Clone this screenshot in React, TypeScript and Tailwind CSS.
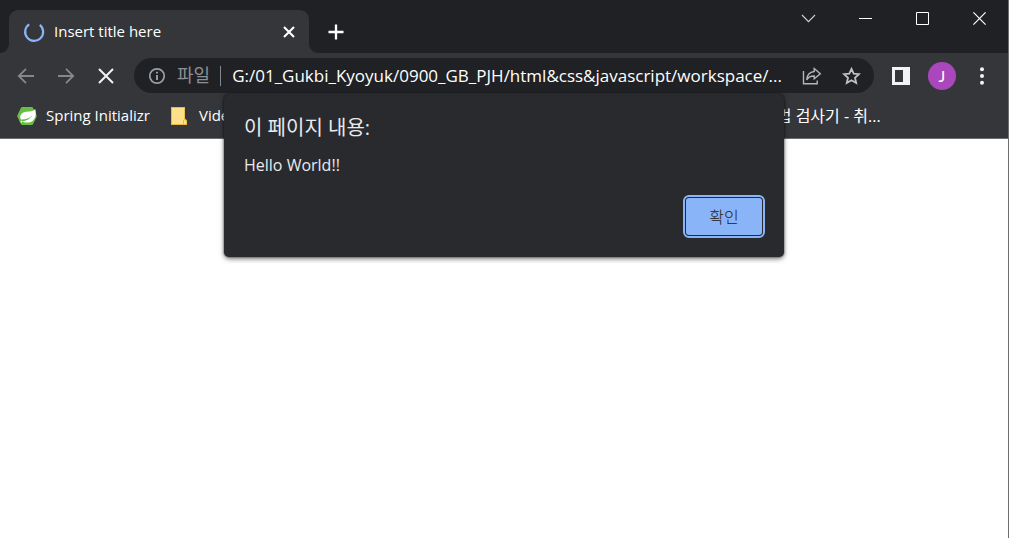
import type { ReactNode } from "react";

function IconButton({ label, className, children }: { label: string; className: string; children: ReactNode }) {
  return (
    <button type="button" aria-label={label} className={`flex shrink-0 items-center justify-center ${className}`}>
      {children}
    </button>
  );
}

function TitleBar() {
  return (
    <header className="flex h-[53px] items-start bg-[#202124]">
      <div className="flex h-full items-end">
        <svg width="9" height="9" viewBox="0 0 9 9" className="shrink-0" aria-hidden="true">
          <path d="M9 0A9 9 0 0 1 0 9H9Z" fill="#35363a" />
        </svg>
        <div className="flex h-[43px] w-[300px] items-center rounded-t-[9px] bg-[#35363a] pr-3 pl-[14px]">
          <svg width="22" height="22" viewBox="0 0 22 22" fill="none" className="shrink-0" aria-hidden="true">
            <path d="M6.2 3.4A9 9 0 1 0 16.8 3.9" stroke="#8ab4f8" strokeWidth="2.2" />
          </svg>
          <span className="ml-[9px] grow text-[15px] text-white">Insert title here</span>
          <IconButton label="Close tab" className="size-4">
            <svg width="12" height="12" viewBox="0 0 12 12" stroke="#fff" strokeWidth="2.1">
              <path d="M1 1L11 11M11 1L1 11" />
            </svg>
          </IconButton>
        </div>
        <svg width="9" height="9" viewBox="0 0 9 9" className="shrink-0" aria-hidden="true">
          <path d="M0 0A9 9 0 0 0 9 9H0Z" fill="#35363a" />
        </svg>
      </div>
      <IconButton label="New tab" className="mt-[14px] ml-1 h-[35px] w-7">
        <svg width="16" height="16" viewBox="0 0 16 16" stroke="#fff" strokeWidth="2.3">
          <path d="M8 .5V15.5M.5 8H15.5" />
        </svg>
      </IconButton>
      <div className="ml-auto flex">
        <IconButton label="Search tabs" className="h-[37px] w-[57px]">
          <svg width="15" height="9" viewBox="0 0 15 9" fill="none" stroke="#d0d0d1" strokeWidth="1.1">
            <path d="M1 1L7.5 7.7L14 1" />
          </svg>
        </IconButton>
        <IconButton label="Minimize" className="h-[37px] w-[57px]">
          <svg width="13" height="13" viewBox="0 0 13 13" stroke="#fff">
            <path d="M0 6.5H13" />
          </svg>
        </IconButton>
        <IconButton label="Maximize" className="h-[37px] w-[57px]">
          <svg width="13" height="13" viewBox="0 0 13 13" fill="none" stroke="#fff">
            <path d="M.5 .5H12.5V12.5H.5Z" />
          </svg>
        </IconButton>
        <IconButton label="Close" className="h-[37px] w-[57px]">
          <svg width="13" height="13" viewBox="0 0 13 13" stroke="#fff" strokeWidth="1.2">
            <path d="M.4 .4L12.6 12.6M12.6 .4L.4 12.6" />
          </svg>
        </IconButton>
      </div>
    </header>
  );
}

function Toolbar() {
  return (
    <div className="flex h-[45px] items-center bg-[#35363a] pr-[18px] pl-[6px]">
      <IconButton label="Back" className="h-8 w-10">
        <svg width="18" height="16" viewBox="0 0 18 16" fill="none" stroke="#86878a" strokeWidth="1.8">
          <path d="M17 8H2M9 .8L1.8 8L9 15.2" />
        </svg>
      </IconButton>
      <IconButton label="Forward" className="h-8 w-10">
        <svg width="18" height="16" viewBox="0 0 18 16" fill="none" stroke="#86878a" strokeWidth="1.8">
          <path d="M1 8H16M9 .8L16.2 8L9 15.2" />
        </svg>
      </IconButton>
      <IconButton label="Stop loading" className="h-8 w-10">
        <svg width="16" height="16" viewBox="0 0 16 16" stroke="#f1f3f4" strokeWidth="2">
          <path d="M1 1L15 15M15 1L1 15" />
        </svg>
      </IconButton>
      <div className="ml-2 flex h-[35px] min-w-0 grow items-center rounded-full bg-[#202124] pr-[13px] pl-[14px]">
        <svg width="18" height="18" viewBox="0 0 18 18" fill="none" className="shrink-0" aria-hidden="true">
          <circle cx="9" cy="9" r="7.2" stroke="#9aa0a6" strokeWidth="1.7" />
          <path d="M9 8V13M9 4.8V6.6" stroke="#9aa0a6" strokeWidth="1.9" />
        </svg>
        <label htmlFor="address" className="ml-[11px] shrink-0 text-[18px] text-[#8b9096]">
          파일
        </label>
        <span className="ml-[10px] h-5 w-px shrink-0 bg-[#80868b]" />
        <input
          id="address"
          type="text"
          readOnly
          value="G:/01_Gukbi_Kyoyuk/0900_GB_PJH/html&css&javascript/workspace/..."
          className="ml-[11px] min-w-0 grow bg-transparent text-[17px] text-white outline-none"
        />
        <IconButton label="Share this page" className="ml-2 size-6">
          <svg width="20" height="18" viewBox="0 0 20 18" fill="none" stroke="#b4b5b8" strokeWidth="1.4">
            <path d="M1.5 4V16.8H15.2V13.5" />
            <path d="M12.2 1.5L18.3 6.7L12.2 11.8V9C8.7 8.9 6.4 10 4.7 12.8C5 8 7.9 5 12.2 4.5Z" />
          </svg>
        </IconButton>
        <IconButton label="Bookmark this page" className="ml-[17px] size-5">
          <svg width="19" height="18" viewBox="0 0 19 18" fill="none" stroke="#c0c1c4" strokeWidth="1.8">
            <path d="M9.5 1.9L11.7 6.7L17 7.2L13 10.8L14.2 16L9.5 13.2L4.8 16L6 10.8L2 7.2L7.3 6.7Z" />
          </svg>
        </IconButton>
      </div>
      <IconButton label="Side panel" className="ml-[18px] size-[18px]">
        <svg width="18" height="18" viewBox="0 0 18 18">
          <path d="M0 0H18V18H0ZM3 3V15H11V3Z" fill="#f1f3f4" fillRule="evenodd" />
        </svg>
      </IconButton>
      <button
        type="button"
        aria-label="Profile J"
        className="ml-[18px] flex size-7 shrink-0 items-center justify-center rounded-full bg-[#ab47bc] font-['Lato',sans-serif] text-[16px] leading-none text-white"
      >
        J
      </button>
      <IconButton label="Menu" className="ml-[18px] h-7 w-4">
        <svg width="4" height="18" viewBox="0 0 4 18" fill="#f1f3f4">
          <circle cx="2" cy="2.3" r="2" />
          <circle cx="2" cy="9" r="2" />
          <circle cx="2" cy="15.7" r="2" />
        </svg>
      </IconButton>
    </div>
  );
}

function BookmarksBar() {
  return (
    <nav
      aria-label="Bookmarks"
      className="flex h-[41px] items-center border-b border-[#6b6c6e] bg-[#35363a] pb-[5px] pl-[17px] text-[15px] whitespace-nowrap text-white"
    >
      <a href="#spring" className="flex items-center gap-[9px]">
        <svg width="20" height="20" viewBox="0 0 20 20" aria-hidden="true">
          <path d="M5.2 1H14.8Q15.6 1 16 1.7L19.6 9.2Q20 10 19.6 10.8L16 18.3Q15.6 19 14.8 19H5.2Q4.4 19 4 18.3L.4 10.8Q0 10 .4 9.2L4 1.7Q4.4 1 5.2 1Z" fill="#68bd45" />
          <path d="M18.2 3C20 9.5 17.8 15.7 11.8 16.4C8.8 16.8 6.6 16.2 5 15.3C9 14.9 13 13.2 15.5 9.2C12.5 12.2 8.2 13.8 3.9 13.6C1.8 9.5 5 6.2 9.5 5.8C13.2 5.5 16.3 5.5 18.2 3Z" fill="#fff" />
          <circle cx="4.4" cy="15.6" r=".9" fill="#fff" />
        </svg>
        Spring Initializr
      </a>
      <a href="#video" className="ml-[21px] flex items-center gap-[12px]">
        <svg width="16" height="18" viewBox="0 0 16 18" aria-hidden="true">
          <path d="M0 0H14V11.5L16 13.2V18H0Z" fill="#e8b93c" />
          <path d="M1 1H13.2V12L12 13.5V17H1Z" fill="#ffe08a" />
          <path d="M13 12.5L15.2 14V17H13Z" fill="#ffe08a" />
        </svg>
        Video
      </a>
      <a href="#spelling" className="ml-[509px] text-[16px]">
        맞춤법 검사기 - 취...
      </a>
    </nav>
  );
}

function AlertDialog() {
  return (
    <section
      role="alertdialog"
      aria-labelledby="alert-title"
      aria-describedby="alert-message"
      className="absolute top-[94px] left-1/2 flex w-[560px] max-w-full -translate-x-1/2 flex-col rounded-[5px] bg-[#292a2d] px-5 pt-[20px] pb-[22px] text-[#e8eaed] shadow-[0_2px_5px_rgba(0,0,0,0.5),0_0_2px_rgba(0,0,0,0.7)]"
    >
      <h1 id="alert-title" className="text-[20px] leading-[28px]">
        이 페이지 내용:
      </h1>
      <p id="alert-message" className="mt-[11px] text-[16px] leading-6">
        Hello World!!
      </p>
      <button
        type="button"
        className="mt-[21px] mr-[2px] h-[37px] w-[76px] self-end rounded-[3px] bg-[#8ab4f8] text-[16px] leading-none font-light text-[#202124] outline-2 outline-offset-1 outline-[#8ab4f8]"
      >
        확인
      </button>
    </section>
  );
}

export default function App() {
  return (
    <div className="relative flex min-h-screen flex-col overflow-hidden border-r border-[#6e6e6e] bg-white font-['Open_Sans','Noto_Sans_CJK_KR',sans-serif]">
      <TitleBar />
      <Toolbar />
      <BookmarksBar />
      <main className="grow bg-white" />
      <AlertDialog />
    </div>
  );
}
